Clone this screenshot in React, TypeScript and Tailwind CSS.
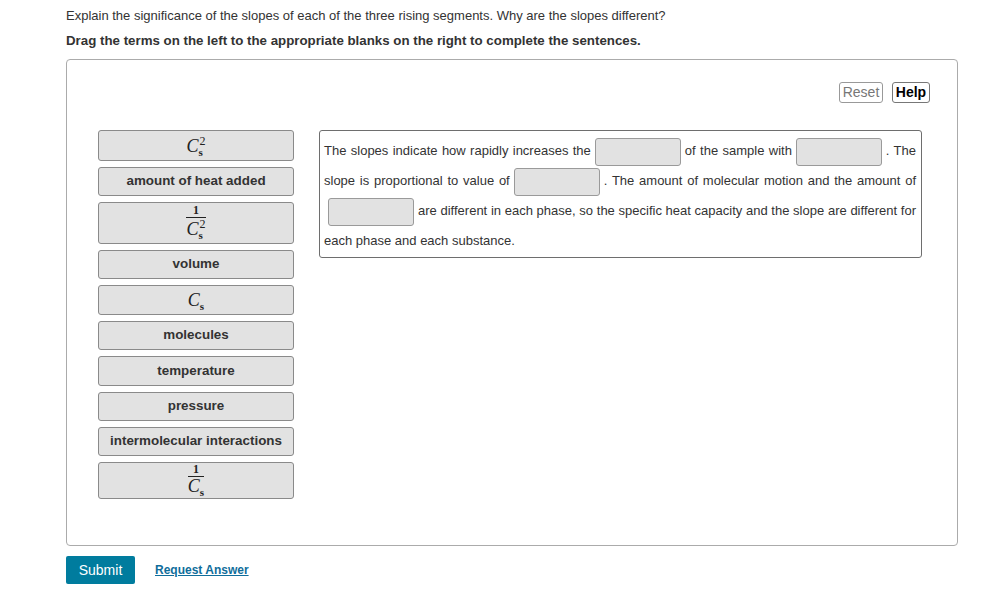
import type { ReactNode } from "react";

const SERIF = "font-['Liberation_Serif','Times_New_Roman',serif]";

function Cs({ sq }: { sq?: boolean }) {
  return (
    <span className={`${SERIF} inline-flex items-end font-normal text-[#222] leading-none`}>
      <span className="italic text-[18px] leading-[17px]">C</span>
      <span className="flex flex-col items-start">
        {sq && <span className="text-[12px] leading-[10px] mb-[-1px] ml-[1px]">2</span>}
        <span className="text-[11px] leading-[10px] font-bold relative top-[2px]">s</span>
      </span>
    </span>
  );
}

function Frac({ sq }: { sq?: boolean }) {
  return (
    <span className="inline-flex flex-col items-center">
      <span className={`${SERIF} text-[12px] leading-[12px] font-bold text-[#222] px-[2px]`}>1</span>
      <span className="block h-px w-full bg-[#222] mt-[1px]" />
      <span className="pt-[1px]">
        <Cs sq={sq} />
      </span>
    </span>
  );
}

type Term = { h: string; body: ReactNode };

const terms: Term[] = [
  { h: "h-[31px]", body: <Cs sq /> },
  { h: "h-[29px]", body: "amount of heat added" },
  { h: "h-[42px]", body: <Frac sq /> },
  { h: "h-[29px]", body: "volume" },
  { h: "h-[30px]", body: <Cs /> },
  { h: "h-[29px]", body: "molecules" },
  { h: "h-[30px]", body: "temperature" },
  { h: "h-[29px]", body: "pressure" },
  { h: "h-[29px]", body: "intermolecular interactions" },
  { h: "h-[37px]", body: <Frac /> },
];

function Blank() {
  return (
    <span className="inline-block w-[86px] h-[28px] align-middle mx-[4px] bg-[#e2e2e2] border border-[#9a9a9a] rounded-[3px]" />
  );
}

export default function App() {
  return (
    <div className="min-h-[600px] bg-white pl-[66px] pt-[8px] font-['Liberation_Sans',Arial,sans-serif] text-[#333]">
      <p className="text-[13px] leading-[16px]">
        Explain the significance of the slopes of each of the three rising segments. Why are the slopes different?
      </p>
      <p className="mt-[9px] text-[13.3px] leading-[16px] font-bold">
        Drag the terms on the left to the appropriate blanks on the right to complete the sentences.
      </p>

      <div className="mt-[10px] w-[892px] h-[487px] border border-[#ababab] rounded-[4px]">
        <div className="flex justify-end gap-[9px] pt-[22px] pr-[27px]">
          <button className="h-[21px] w-[44px] border border-[#999] rounded-[3px] text-[14px] leading-[19px] text-[#777]">
            Reset
          </button>
          <button className="h-[21px] w-[38px] border border-[#777] rounded-[3px] text-[14px] leading-[19px] font-bold text-black">
            Help
          </button>
        </div>

        <div className="flex items-start gap-[25px] pl-[31px] mt-[27px]">
          <div className="flex flex-col gap-[6px] w-[196px]">
            {terms.map((t, i) => (
              <div
                key={i}
                className={`${t.h} flex items-center justify-center bg-[#e2e2e2] border border-[#8a8a8a] rounded-[3px] text-[13.4px] font-bold text-[#333]`}
              >
                {t.body}
              </div>
            ))}
          </div>

          <div className="w-[603px] border border-[#6e6e6e] rounded-[3px] pt-[5px] pb-[1px] pl-[4px] pr-[5px] text-[13px] leading-[30px] text-justify text-[#333]">
            The slopes indicate how rapidly increases the
            <Blank />
            of the sample with
            <Blank />. The slope is proportional to value of
            <Blank />. The amount of molecular motion and the amount of
            <Blank />
            are different in each phase, so the specific heat capacity and the slope are different for each phase and each substance.
          </div>
        </div>
      </div>

      <div className="flex items-center gap-[20px] mt-[10px]">
        <button className="w-[69px] h-[28px] bg-[#007c9e] rounded-[2px] text-white text-[14px]">
          Submit
        </button>
        <a className="text-[12px] font-bold text-[#0f6d9b] underline cursor-pointer">Request Answer</a>
      </div>
    </div>
  );
}
